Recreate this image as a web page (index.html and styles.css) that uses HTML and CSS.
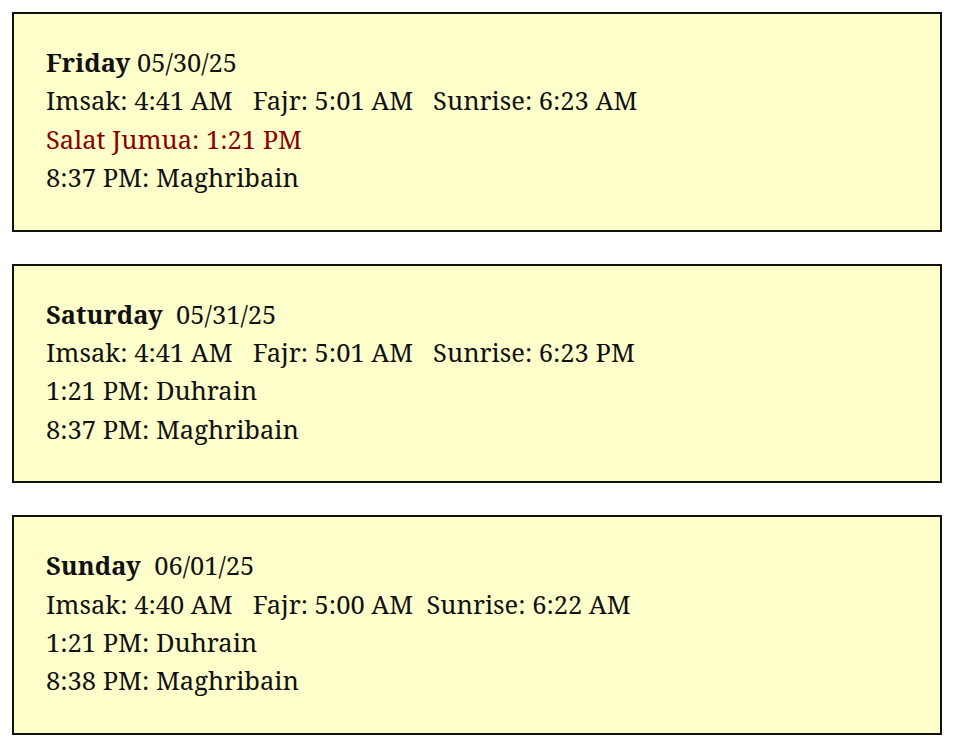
FILE: index.html
```html
<!DOCTYPE html>
<html>
<head>
<meta charset="utf-8">
<link rel="stylesheet" href="styles.css">
</head>
<body>
<div class="days">
  <div class="day">
    <div class="line"><b>Friday</b> 05/30/25</div>
    <div class="line">Imsak: 4:41 AM &nbsp; Fajr: 5:01 AM &nbsp; Sunrise: 6:23 AM</div>
    <div class="line jumua">Salat Jumua: 1:21 PM</div>
    <div class="line">8:37 PM: Maghribain</div>
  </div>
  <div class="day">
    <div class="line"><b>Saturday</b> &nbsp;05/31/25</div>
    <div class="line">Imsak: 4:41 AM &nbsp; Fajr: 5:01 AM &nbsp; Sunrise: 6:23 PM</div>
    <div class="line">1:21 PM: Duhrain</div>
    <div class="line">8:37 PM: Maghribain</div>
  </div>
  <div class="day">
    <div class="line"><b>Sunday</b> &nbsp;06/01/25</div>
    <div class="line">Imsak: 4:40 AM &nbsp; Fajr: 5:00 AM &nbsp;Sunrise: 6:22 AM</div>
    <div class="line">1:21 PM: Duhrain</div>
    <div class="line">8:38 PM: Maghribain</div>
  </div>
</div>
</body>
</html>
```
FILE: styles.css
```css
body {
  margin: 12px;
  background: #ffffff;
  font-family: "Noto Serif", "Droid Serif", "DejaVu Serif", serif;
  font-size: 25.5px;
  color: #111;
}
.days {
  display: flex;
  flex-direction: column;
  gap: 32px;
  width: 930px;
}
.day {
  background: #ffffcc;
  border: 2px solid #111;
  padding: 29px 32px 33px;
  line-height: 38.4px;
}
.jumua {
  color: #8b0000;
}
```
